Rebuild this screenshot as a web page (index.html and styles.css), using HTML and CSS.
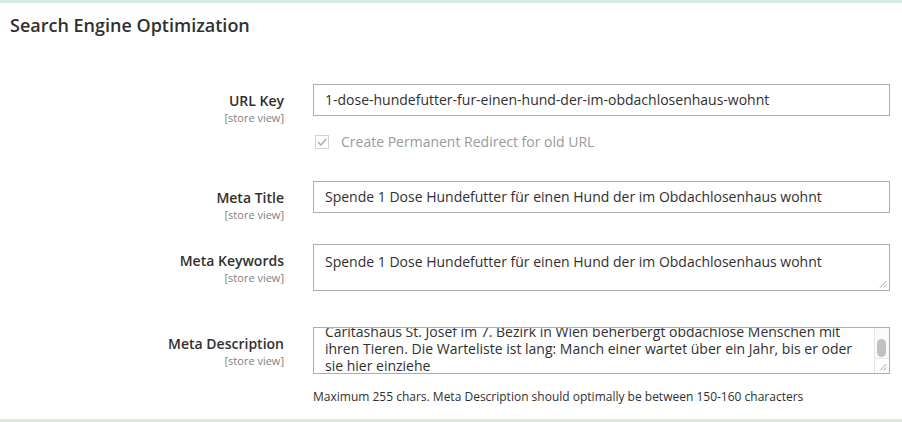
FILE: index.html
```html
<!DOCTYPE html>
<html lang="de">
<head>
<meta charset="utf-8">
<title>Search Engine Optimization</title>
<link rel="stylesheet" href="styles.css">
</head>
<body>
<section class="fieldset">
  <h2 class="title">Search Engine Optimization</h2>
  <div class="fields">
    <div class="field">
      <div class="label"><span class="label-text">URL Key</span><span class="scope">[store view]</span></div>
      <div class="input">1-dose-hundefutter-fur-einen-hund-der-im-obdachlosenhaus-wohnt</div>
    </div>
    <div class="field field-check">
      <div></div>
      <div class="check-row">
        <span class="checkbox">
          <svg width="10" height="8" viewBox="0 0 10 8"><path d="M1 4 L4 7 L9 1" fill="none" stroke="#a8a8a8" stroke-width="1.4"/></svg>
        </span>
        <span class="check-label">Create Permanent Redirect for old URL</span>
      </div>
    </div>
    <div class="field field-title">
      <div class="label"><span class="label-text">Meta Title</span><span class="scope">[store view]</span></div>
      <div class="input">Spende 1 Dose Hundefutter für einen Hund der im Obdachlosenhaus wohnt</div>
    </div>
    <div class="field field-keywords">
      <div class="label"><span class="label-text">Meta Keywords</span><span class="scope">[store view]</span></div>
      <div class="textarea">
        <div class="ta-text">Spende 1 Dose Hundefutter für einen Hund der im Obdachlosenhaus wohnt</div>
        <svg class="grip" width="8" height="8" viewBox="0 0 8 8"><path d="M7.5 1 L1 7.5 M7.5 4.5 L4.5 7.5" stroke="#9a9a9a" stroke-width="0.9"/></svg>
      </div>
    </div>
    <div class="field field-desc">
      <div class="label"><span class="label-text">Meta Description</span><span class="scope">[store view]</span></div>
      <div class="control">
        <div class="textarea scroll">
          <div class="ta-view">
            <div class="ta-lines">Caritashaus St. Josef im 7. Bezirk in Wien beherbergt obdachlose Menschen mit<br>ihren Tieren. Die Warteliste ist lang: Manch einer wartet über ein Jahr, bis er oder<br>sie hier einziehe</div>
          </div>
          <div class="scrollbar">
            <div class="track"><div class="thumb"></div></div>
            <div class="corner">
              <svg class="grip-corner" width="8" height="8" viewBox="0 0 8 8"><path d="M7.5 1 L1 7.5 M7.5 4.5 L4.5 7.5" stroke="#9a9a9a" stroke-width="0.9"/></svg>
            </div>
          </div>
        </div>
        <div class="note">Maximum 255 chars. Meta Description should optimally be between 150-160 characters</div>
      </div>
    </div>
  </div>
</section>
</body>
</html>
```
FILE: styles.css
```css
* { box-sizing: border-box; }
html, body { margin: 0; padding: 0; background: #ffffff; }
body {
  font-family: "Open Sans", "DejaVu Sans", sans-serif;
  color: #303030;
  width: 902px;
  height: 422px;
  overflow: hidden;
}
.fieldset {
  height: 422px;
  border-top: 3px solid #d4ece0;
  border-bottom: 3px solid #d4ece0;
}
.title {
  margin: 0;
  padding: 10px 0 0 10px;
  font-size: 18px;
  font-weight: 600;
  line-height: 24px;
  color: #303030;
}
.fields { margin-top: 47px; }
.field {
  display: grid;
  grid-template-columns: 284px 577px;
  column-gap: 29px;
  align-items: start;
}
.label {
  text-align: right;
  padding-top: 7px;
}
.label-text {
  display: block;
  font-size: 14px;
  font-weight: 600;
  line-height: 19px;
  color: #303030;
}
.scope {
  display: block;
  font-size: 11px;
  font-weight: 400;
  line-height: 15px;
  color: #808080;
}
.input {
  height: 32px;
  border: 1px solid #adadad;
  padding: 0 11px;
  font-size: 14px;
  line-height: 30px;
  white-space: nowrap;
  overflow: hidden;
  color: #303030;
}
.field-check { margin-top: 8px; }
.check-row {
  display: flex;
  align-items: center;
  gap: 12px;
  height: 18px;
  padding-left: 2px;
}
.checkbox {
  width: 14px;
  height: 14px;
  border: 1px solid #d2d2d2;
  background: #fff;
  display: flex;
  align-items: center;
  justify-content: center;
}
.check-label {
  font-size: 14px;
  line-height: 18px;
  color: #9a9a9a;
}
.field-title { margin-top: 30px; }
.field-keywords { margin-top: 22px; }
.field-desc { margin-top: 36px; }
.textarea {
  position: relative;
  height: 47px;
  border: 1px solid #adadad;
  font-size: 14px;
  color: #303030;
}
.ta-text {
  padding: 8px 11px;
  line-height: 18px;
  white-space: nowrap;
}
.grip {
  position: absolute;
  right: 2px;
  bottom: 2px;
}
.textarea.scroll {
  display: flex;
}
.ta-view {
  flex: 1;
  overflow: hidden;
  padding: 0 11px;
}
.ta-lines {
  margin-top: -5px;
  line-height: 17px;
  white-space: nowrap;
}
.scrollbar {
  width: 15px;
  border-left: 1px solid #e6e6e6;
  display: flex;
  flex-direction: column;
  background: #fafafa;
}
.track {
  flex: 1;
  padding: 11px 3px 0 2px;
}
.thumb {
  width: 9px;
  height: 18px;
  border-radius: 5px;
  background: #c1c1c1;
}
.corner {
  height: 15px;
  border-top: 1px solid #e6e6e6;
  background: #fff;
  display: flex;
  align-items: flex-end;
  justify-content: flex-end;
  padding: 0 2px 2px 0;
}
.note {
  margin-top: 15px;
  font-size: 12px;
  line-height: 16px;
  color: #303030;
}
```
